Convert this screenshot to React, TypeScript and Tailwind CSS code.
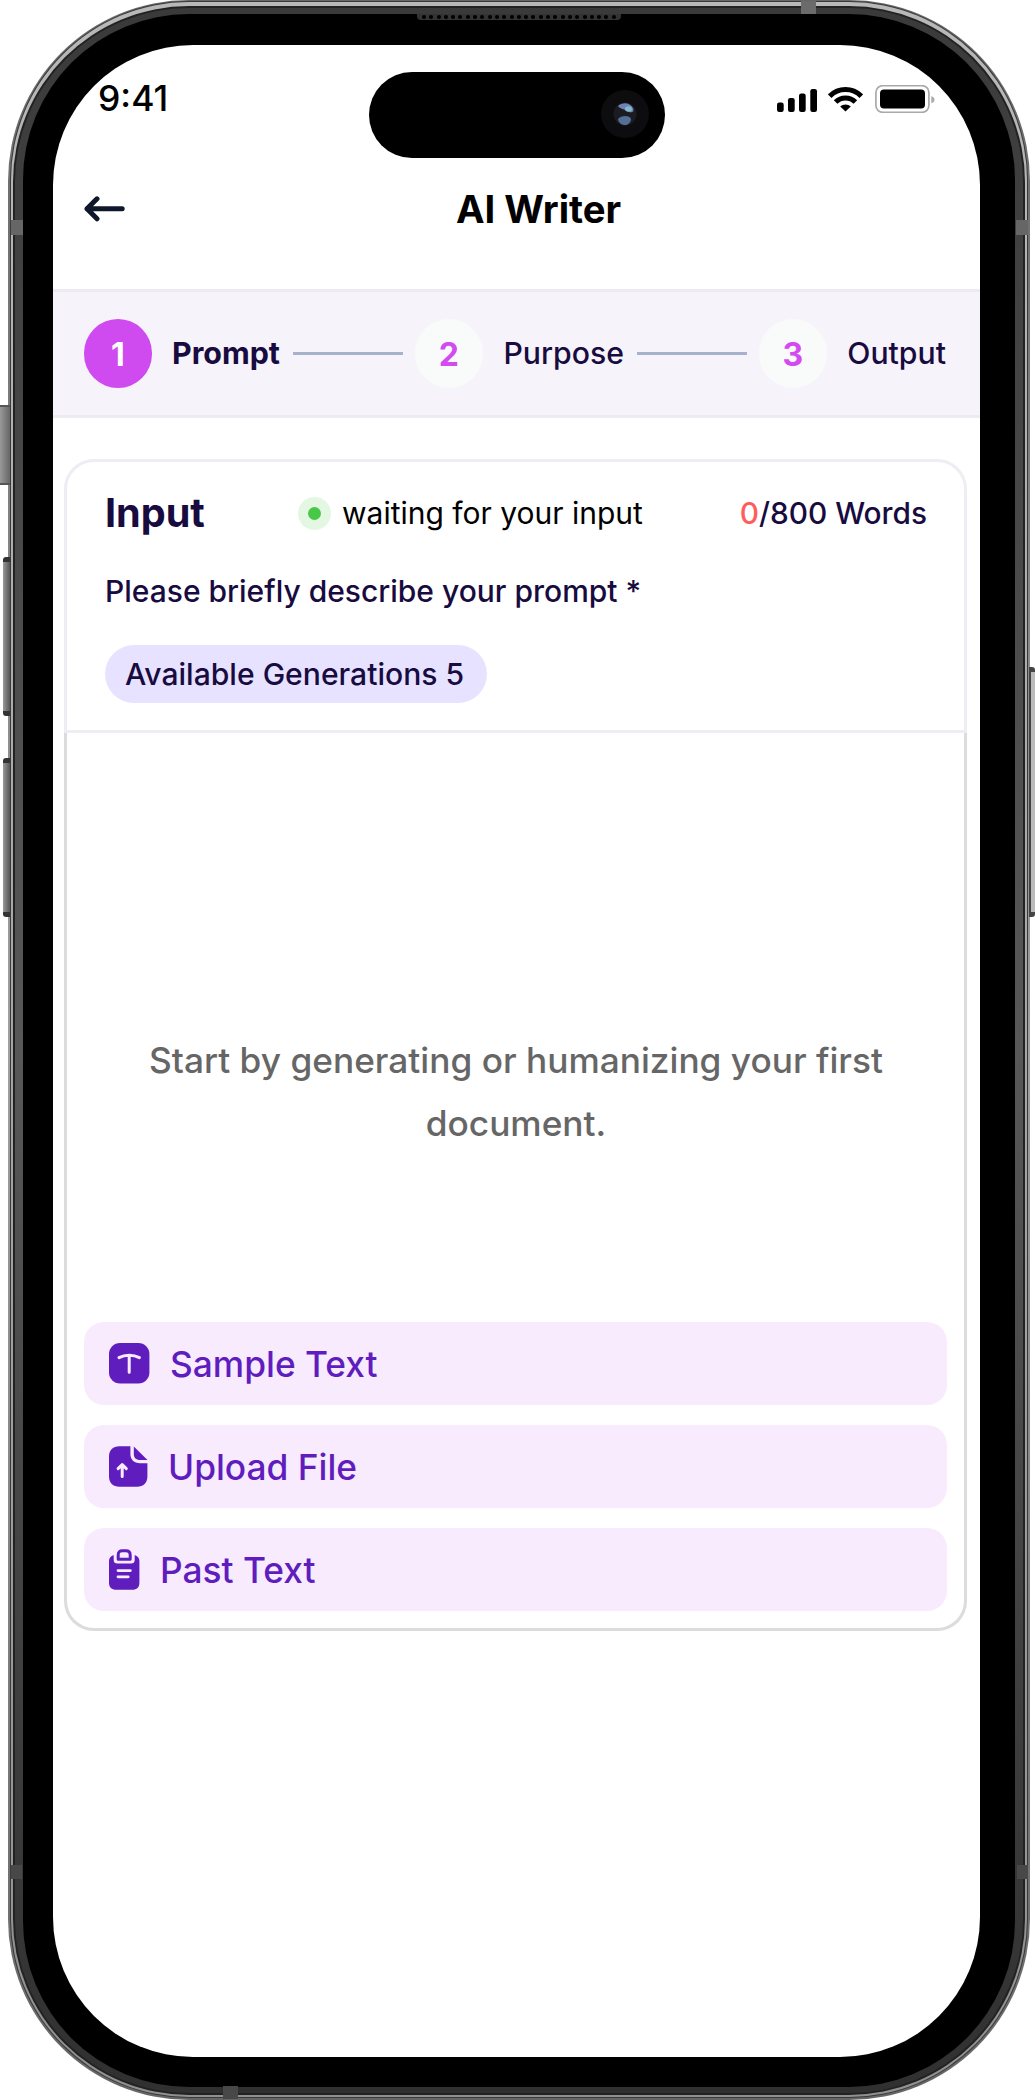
import React from 'react';

function Signal() {
  return (
    <svg width="41" height="24" viewBox="0 0 41 24" fill="#000">
      <rect x="0" y="13.5" width="6.7" height="9.5" rx="2.2" />
      <rect x="11" y="9" width="6.7" height="14" rx="2.2" />
      <rect x="22" y="4.5" width="6.7" height="18.5" rx="2.2" />
      <rect x="33.3" y="0" width="6.7" height="23" rx="2.2" />
    </svg>
  );
}

function Wifi() {
  return (
    <svg width="35" height="25" viewBox="0 0 35 25" fill="none" stroke="#000" strokeWidth="5">
      <path d="M1.7 9.2C10.5 0.4 24.5 0.4 33.3 9.2" />
      <path d="M7.6 15.1C13 9.6 22 9.6 27.4 15.1" />
      <path d="M17.5 24.6L12.2 19.5C15 16.7 20 16.7 22.8 19.5Z" fill="#000" stroke="none" />
    </svg>
  );
}

function Battery() {
  return (
    <svg width="60" height="28" viewBox="0 0 60 28">
      <rect x="0.9" y="0.7" width="53" height="26.6" rx="6.8" fill="none" stroke="#a9a9a9" strokeWidth="1.7" />
      <rect x="5" y="4.5" width="45" height="19" rx="4" fill="#000" />
      <path d="M56.3 11.2C58.2 11.8 59.5 13 59.5 14.7S58.2 17.6 56.3 18.2Z" fill="#a9a9a9" />
    </svg>
  );
}

function BackArrow() {
  return (
    <svg width="41" height="26" viewBox="0 0 41 26" fill="none" stroke="#0f172a" strokeWidth="5" strokeLinecap="round" strokeLinejoin="round">
      <path d="M38.2 12.8H3M13 2.8L3 12.8L13 22.8" />
    </svg>
  );
}

function TextIcon() {
  return (
    <svg width="41" height="41" viewBox="0 0 41 41">
      <rect width="40.4" height="40.4" rx="11" fill="#601dbe" />
      <path d="M10 14.6C16 11.3 24.4 11.3 30.4 14.6M20.2 12.4V29.3" fill="none" stroke="#f9ebfe" strokeWidth="3" strokeLinecap="round" />
    </svg>
  );
}

function UploadIcon() {
  return (
    <svg width="39" height="41" viewBox="0 0 39 41">
      <path d="M21.4 0.3H10.5C4 0.3 0 4.2 0 10.5V30.5C0 37 4 40.8 10.5 40.8H28C34.4 40.8 38.4 37 38.4 30.5V17.2H31C25 17.2 21.4 13.5 21.4 8Z" fill="#601dbe" />
      <path d="M24.8 0.5L38.5 14H31C27 14 24.8 11.7 24.8 8Z" fill="#601dbe" />
      <path d="M13.2 30.6V19M9.1 22.6L13.2 18.6L17.3 22.6" fill="none" stroke="#f9ebfe" strokeWidth="3" strokeLinecap="round" strokeLinejoin="round" />
    </svg>
  );
}

function ClipboardIcon() {
  return (
    <svg width="31" height="41" viewBox="0 0 31 41">
      <path d="M4.7 6C1.8 7 0 9 0 12V33.5C0 38.5 2.5 40.8 7.5 40.8H23C28 40.8 30.4 38.5 30.4 33.5V12C30.4 9 28.6 7 25.7 6V11C25.7 13.3 24.4 14.6 22 14.6H8.4C6 14.6 4.7 13.3 4.7 11Z" fill="#601dbe" />
      <path d="M9.2 6C9.2 3 10.6 1.8 13.4 1.8H17C19.8 1.8 21.2 3 21.2 6V10.2H9.2Z" fill="none" stroke="#601dbe" strokeWidth="3" strokeLinejoin="round" />
      <path d="M9 21.6H21.4M9 27.8H19.2" stroke="#f9ebfe" strokeWidth="2.8" strokeLinecap="round" />
    </svg>
  );
}

function Step({ n, label, active }: { n: number; label: string; active?: boolean }) {
  return (
    <div className="flex items-center gap-[20px]">
      <div
        className={
          active
            ? 'flex h-[69px] w-[68px] items-center justify-center rounded-full bg-[#cf4aef] pt-[2px] text-[32px] font-bold text-white'
            : 'flex h-[69px] w-[68px] items-center justify-center rounded-full bg-[#f9fbfa] pr-px pt-[2px] text-[32px] font-bold text-[#d24af0]'
        }
      >
        {n}
      </div>
      <span className={active ? 'pt-px text-[30.4px] font-bold' : 'pt-px text-[30.2px] font-medium'}>{label}</span>
    </div>
  );
}

function Action({ icon, label }: { icon: React.ReactNode; label: string }) {
  return (
    <button className="flex h-[83px] w-full items-center gap-[20px] rounded-[20px] bg-[#f9ebfe] pl-[25px] text-[35.3px] font-medium text-[#601dbe]">
      {icon}
      <span className="pt-[4px]">{label}</span>
    </button>
  );
}

function SideButtons() {
  return (
    <>
      <div className="absolute left-0 top-[405px] h-[80px] w-[10px] border-y-2 border-[#555] bg-linear-to-r from-[#999] to-[#666]" />
      <div className="absolute left-[3px] top-[557px] h-[159px] w-[7px] rounded-l-[3px] border-y-[5px] border-[#333] bg-linear-to-r from-[#999] to-[#555]" />
      <div className="absolute left-[3px] top-[758px] h-[159px] w-[7px] rounded-l-[3px] border-y-[5px] border-[#333] bg-linear-to-r from-[#999] to-[#555]" />
      <div className="absolute right-0 top-[667px] h-[250px] w-[6px] rounded-r-[3px] border-y-[5px] border-l-2 border-[#444] bg-[#bbb]" />
    </>
  );
}

function AntennaBands() {
  return (
    <>
      <div className="absolute left-[11px] top-[220px] h-[15px] w-[12px] bg-[#666]" />
      <div className="absolute right-[7px] top-[220px] h-[15px] w-[12px] bg-[#666]" />
      <div className="absolute left-[11px] top-[1865px] h-[14px] w-[11px] bg-[#484848]" />
      <div className="absolute right-[7px] top-[1865px] h-[14px] w-[11px] bg-[#484848]" />
      <div className="absolute left-[801px] top-px h-[13px] w-[15px] bg-[#6b6b6b]" />
      <div className="absolute bottom-px left-[223px] h-[13px] w-[15px] bg-[#484848]" />
      <div className="absolute left-[417px] top-[14px] flex h-[6px] w-[204px] items-center justify-between rounded-b-[4px] bg-[#333] px-[5px]">
        {Array.from({ length: 27 }, (_, i) => (
          <span key={i} className="h-[4px] w-[4px] rounded-full bg-black" />
        ))}
      </div>
    </>
  );
}

export default function App() {
  return (
    <div className="relative h-[2100px] w-[1035px] overflow-hidden bg-white pl-[8px] pr-[5px] font-['Inter',sans-serif] text-[#180b40]">
      <SideButtons />
      <div className="h-full rounded-[181px] bg-linear-to-b from-[#666] via-[#a0a0a0] to-[#666] p-[2px] pt-px">
        <div className="h-full rounded-[179px] bg-[#3a3a3a] p-px">
          <div className="h-full rounded-[178px] bg-linear-to-b from-[#b8b8b8] via-[#a6a6a6] to-[#909090] p-[2px] pt-[4px]">
            <div className="h-full rounded-[176px] bg-[#222] p-[2px]">
              <div className="h-full rounded-[174px] bg-linear-to-b from-[#3a3a3a] via-[#585858] to-[#303030] px-[8px] py-[6px]">
                <div className="h-full rounded-[166px] bg-black pb-[30px] pl-[30px] pr-[35px] pt-[31px]">
                  <main className="h-full overflow-hidden rounded-[140px] bg-white">
                    <div className="flex h-[105px] items-center justify-between pl-[45px] pr-[45px]">
                      <span className="w-[226px] pt-[2px] text-[35.5px] font-medium text-black">9:41</span>
                      <div className="relative mt-[27px] h-[86px] w-[296px] self-start rounded-full bg-black">
                        <div className="absolute right-[16px] top-[18px] flex h-[48px] w-[48px] items-center justify-center rounded-full bg-[#0d0d0f]">
                          <svg width="24" height="24" viewBox="0 0 24 24">
                            <circle cx="12" cy="12" r="11.5" fill="#1b1c22" />
                            <path d="M5 4C9 0 17 0 20 6C22 11 17 11 14 9C11 7 7 7 5 4Z" fill="#7180b5" />
                            <ellipse cx="15.5" cy="7" rx="3.5" ry="2.7" fill="#82b9ce" />
                            <path d="M5 17C8 13 17 13 18 17C18 21 14 23.5 11 23C8 22.5 5 20 5 17Z" fill="#536f96" />
                          </svg>
                        </div>
                      </div>
                      <div className="flex w-[226px] items-center justify-end gap-[10px] pt-[3px]">
                        <div className="mt-[4px]"><Signal /></div>
                        <Wifi />
                        <div className="ml-[2px]"><Battery /></div>
                      </div>
                    </div>

                    <header className="flex h-[118px] items-center pl-[31px] pr-[28px]">
                      <BackArrow />
                      <h1 className="flex-1 pt-[2px] text-center text-[38.3px] font-bold text-black">AI Writer</h1>
                    </header>
                    <div className="h-[21px]" />

                    <nav className="flex h-[129px] items-center justify-between border-y-[3px] border-[#ecebf1] bg-[#f6f3fb] pl-[31px] pr-[34px]">
                      <Step n={1} label="Prompt" active />
                      <div className="h-[3px] w-[110px] bg-[#a6b1ca]" />
                      <Step n={2} label="Purpose" />
                      <div className="h-[3px] w-[110px] bg-[#a6b1ca]" />
                      <Step n={3} label="Output" />
                    </nav>

                    <section className="ml-[11px] mr-[13px] mt-[41px]">
                      <div className="h-[274px] rounded-t-[30px] border-[3px] border-[#ededf3] pl-[38px] pr-[37px] pt-[25px]">
                        <div className="flex h-[52px] items-center">
                          <h2 className="w-[193px] pt-[2px] text-[39.6px] font-bold">Input</h2>
                          <span className="flex h-[33px] w-[33px] items-center justify-center rounded-full bg-[#e3f7e3]">
                            <span className="h-[13px] w-[13px] rounded-full bg-[#47c947]" />
                          </span>
                          <span className="ml-[11px] whitespace-nowrap text-[30px] font-normal text-black">waiting for your input</span>
                          <span className="ml-auto whitespace-nowrap text-[29.8px] font-medium">
                            <span className="text-[#ff5c5c]">0</span>/800 Words
                          </span>
                        </div>
                        <p className="mt-[30px] text-[30px] font-medium leading-[45px]">Please briefly describe your prompt *</p>
                        <div className="mt-[31px] flex h-[58px] w-[382px] items-center whitespace-nowrap rounded-full bg-[#e6e2ff] pl-[20px] pt-[2px] text-[30.1px] font-medium">
                          Available Generations 5
                        </div>
                      </div>
                      <div className="flex h-[898px] flex-col rounded-b-[30px] border-[3px] border-t-0 border-[#dcdcdc] px-[17px] pb-[17px]">
                        <p className="flex flex-1 flex-col items-center pl-px pt-[296px] text-center text-[35.25px] font-medium leading-[63px] text-[#666]">
                          <span className="whitespace-nowrap">Start by generating or humanizing your first</span>
                          <span>document.</span>
                        </p>
                        <div className="flex flex-col gap-[20px]">
                          <Action icon={<TextIcon />} label="Sample Text" />
                          <Action icon={<UploadIcon />} label="Upload File" />
                          <Action icon={<ClipboardIcon />} label="Past Text" />
                        </div>
                      </div>
                    </section>
                  </main>
                </div>
              </div>
            </div>
          </div>
        </div>
      </div>
      <AntennaBands />
    </div>
  );
}
